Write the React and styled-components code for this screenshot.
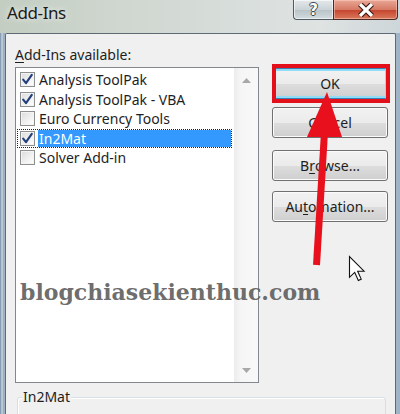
import React from 'react';
import styled, { createGlobalStyle } from 'styled-components';

const GlobalStyle = createGlobalStyle`
  html, body {
    margin: 0;
    padding: 0;
    background: #ffffff;
  }
  body {
    width: 400px;
    height: 414px;
    overflow: hidden;
  }
  * {
    box-sizing: border-box;
  }
`;

const addIns = [
  { name: 'Analysis ToolPak', checked: true },
  { name: 'Analysis ToolPak - VBA', checked: true },
  { name: 'Euro Currency Tools', checked: false },
  { name: 'In2Mat', checked: true, selected: true },
  { name: 'Solver Add-in', checked: false },
];

function CheckBox({ checked }) {
  return (
    <Box>
      {checked && (
        <svg width="13" height="13" viewBox="0 0 13 13">
          <path d="M2.2 6.6 L5 10.2 L10.8 1.8" fill="none" stroke="#233f7c" strokeWidth="2.1" strokeLinecap="round" strokeLinejoin="round" />
        </svg>
      )}
    </Box>
  );
}

const CloseIcon = () => (
  <svg width="20" height="14" viewBox="0 0 20 14">
    <path d="M4 1 L16 13 M16 1 L4 13" stroke="#3b1d16" strokeWidth="5.5" strokeLinecap="butt" />
    <path d="M4 1 L16 13 M16 1 L4 13" stroke="#ffffff" strokeWidth="3.2" strokeLinecap="butt" />
  </svg>
);

function App() {
  return (
    <>
      <GlobalStyle />
      <Window>
        <TitleBar>
          <Title>Add-Ins</Title>
          <CaptionButtons>
            <HelpButton>?</HelpButton>
            <CloseButton>
              <CloseIcon />
            </CloseButton>
          </CaptionButtons>
        </TitleBar>

        <Client>
          <Main>
            <LeftCol>
              <Label>
                <u>A</u>dd-Ins available:
              </Label>
              <ListBox>
                <Items>
                  {addIns.map((item) => (
                    <Row key={item.name} $focused={item.selected}>
                      <CheckBox checked={item.checked} />
                      <ItemText $selected={item.selected}>{item.name}</ItemText>
                    </Row>
                  ))}
                </Items>
                <ScrollBar>
                  <ScrollArrow>
                    <svg width="9" height="5" viewBox="0 0 9 5">
                      <path d="M0 5 L4.5 0 L9 5 Z" fill="#a8a8a8" />
                    </svg>
                  </ScrollArrow>
                  <ScrollArrow>
                    <svg width="9" height="5" viewBox="0 0 9 5">
                      <path d="M0 0 L4.5 5 L9 0 Z" fill="#a8a8a8" />
                    </svg>
                  </ScrollArrow>
                </ScrollBar>
              </ListBox>
            </LeftCol>

            <RightCol>
              <OkWrap>
                <Button $default>OK</Button>
                <RedFrame />
              </OkWrap>
              <Button $gap={8}>Cancel</Button>
              <Button $gap={12}>
                B<u>r</u>owse...
              </Button>
              <Button $gap={10}>
                Au<u>t</u>omation...
              </Button>
            </RightCol>
          </Main>

          <GroupBox>
            <Legend>In2Mat</Legend>
          </GroupBox>
        </Client>

        <Watermark>blogchiasekienthuc.com</Watermark>

        <Overlay width="400" height="414" viewBox="0 0 400 414">
          <line x1="324.5" y1="132" x2="316.5" y2="265" stroke="#e8101c" strokeWidth="7" />
          <polygon points="327,92 307,137 342,137" fill="#e8101c" />
          <path
            transform="translate(349.5 256.5) scale(1.3)"
            d="M0 0 L0 16 L4 12.2 L6.8 18.4 L9 17.4 L6.3 11.3 L11.2 11.3 Z"
            fill="#ffffff"
            stroke="#111111"
            strokeWidth="0.85"
            strokeLinejoin="miter"
          />
        </Overlay>
      </Window>
    </>
  );
}

export default App;

const Window = styled.div`
  position: relative;
  width: 400px;
  height: 414px;
  overflow: hidden;
  font-family: "Noto Sans", "Open Sans", sans-serif;
  color: #1e1e1e;
  background: linear-gradient(90deg, #6f8aa6 0, #c9d5de 2px, #8aa2b8 4px, #b4c3cf 5px, #c6d1d6 50%, #9fb4c6 100%);
`;

const TitleBar = styled.div`
  height: 33px;
  display: flex;
  align-items: flex-start;
  padding: 0 2px 0 7px;
  background: linear-gradient(90deg, #c3cdc1 0%, #cfd7d0 30%, #d8dedb 60%, #dfe3e2 80%, #cdd6da 100%);
`;

const Title = styled.div`
  padding-top: 1px;
  font-size: 17px;
  line-height: 23px;
  letter-spacing: -0.4px;
  color: #1a1a1a;
  text-shadow: 0 0 6px rgba(255, 255, 255, 0.9);
`;

const CaptionButtons = styled.div`
  margin-left: auto;
  display: flex;
`;

const HelpButton = styled.div`
  width: 40px;
  height: 20px;
  border: 1px solid #4f5b64;
  border-top: none;
  border-right: none;
  border-radius: 0 0 0 4px;
  background: linear-gradient(#e4e9eb 0%, #cbd3d7 50%, #b7c2c8 51%, #d3dbde 100%);
  box-shadow: inset 0 0 0 1px rgba(255, 255, 255, 0.6);
  display: flex;
  align-items: center;
  justify-content: center;
  font-family: "DejaVu Sans", sans-serif;
  font-weight: bold;
  font-size: 15px;
  color: #ffffff;
  text-shadow: -1px 0 #3d4a52, 1px 0 #3d4a52, 0 -1px #3d4a52, 0 1px #3d4a52;
`;

const CloseButton = styled.div`
  width: 65px;
  height: 20px;
  border: 1px solid #4a2a22;
  border-top: none;
  border-radius: 0 0 4px 0;
  background: linear-gradient(#e9a897 0%, #d67a65 50%, #c4432d 51%, #d9785a 100%);
  box-shadow: inset 0 0 0 1px rgba(255, 210, 200, 0.5);
  display: flex;
  align-items: center;
  justify-content: center;
`;

const Client = styled.div`
  margin: 0 4px 0 5px;
  height: 381px;
  background: #f0f0f0;
  border: 1px solid #5e6b75;
  border-bottom: none;
  border-radius: 2px 2px 0 0;
  padding: 11px 0 0 9px;
`;

const Main = styled.div`
  display: flex;
`;

const LeftCol = styled.div`
  width: 244px;
  display: flex;
  flex-direction: column;
`;

const Label = styled.div`
  font-size: 14px;
  line-height: 20px;
  margin-bottom: 2px;
  u {
    text-decoration-thickness: 1px;
    text-underline-offset: 2px;
  }
`;

const ListBox = styled.div`
  height: 316px;
  border: 1px solid #828790;
  background: #ffffff;
  display: flex;
`;

const Items = styled.div`
  flex: 1;
  padding: 2px 0 0 1px;
`;

const Row = styled.div`
  width: 215px;
  height: 19.5px;
  display: flex;
  align-items: center;
  padding-left: 2px;
  border: 1px dotted ${(p) => (p.$focused ? '#222' : 'transparent')};
`;

const Box = styled.div`
  width: 15px;
  height: 15px;
  flex: none;
  border: 1px solid #8e8f8f;
  background: linear-gradient(135deg, #dcdcdc 0%, #f2f2f2 60%, #ffffff 100%);
  box-shadow: inset 0 0 0 1px #f4f4f4;
  display: flex;
  align-items: center;
  justify-content: center;
`;

const ItemText = styled.div`
  flex: 1;
  height: 100%;
  margin-left: 3px;
  padding-left: 1px;
  font-size: 14px;
  line-height: 18px;
  white-space: nowrap;
  color: ${(p) => (p.$selected ? '#ffffff' : '#1e1e1e')};
  background: ${(p) => (p.$selected ? '#3399ff' : 'transparent')};
`;

const ScrollBar = styled.div`
  width: 24px;
  display: flex;
  flex-direction: column;
  justify-content: space-between;
  background: linear-gradient(90deg, #ececec 0%, #f6f6f6 30%, #f8f8f8 100%);
`;

const ScrollArrow = styled.div`
  height: 24px;
  display: flex;
  align-items: center;
  justify-content: center;
`;

const RightCol = styled.div`
  margin-left: 13px;
  width: 116px;
  padding-top: 23px;
  display: flex;
  flex-direction: column;
`;

const OkWrap = styled.div`
  position: relative;
`;

const Button = styled.div`
  height: 31px;
  margin-top: ${(p) => (p.$gap ? `${p.$gap}px` : '0')};
  border: 1px solid ${(p) => (p.$default ? '#3c7fb1' : '#707070')};
  border-radius: 3px;
  background: linear-gradient(#f2f2f2 0%, #ebebeb 50%, #dddddd 51%, #cfcfcf 100%);
  box-shadow: ${(p) => (p.$default ? 'inset 0 0 0 2px #8fdcf8' : 'inset 0 0 0 1px #fbfbfb')};
  display: flex;
  align-items: center;
  justify-content: center;
  font-size: 14px;
  color: #1e1e1e;
  u {
    text-decoration-thickness: 1px;
    text-underline-offset: 2px;
  }
`;

const RedFrame = styled.div`
  position: absolute;
  top: -4px;
  bottom: -4px;
  left: 0;
  right: -2px;
  border: 4px solid #e3101c;
`;

const GroupBox = styled.div`
  position: relative;
  margin: 14px 0 0 2px;
  width: 369px;
  height: 40px;
  border: 1px solid #d5dfe5;
  border-radius: 3px;
  box-shadow: inset 1px 1px 0 #ffffff;
`;

const Legend = styled.div`
  position: absolute;
  top: -11px;
  left: 4px;
  padding: 0 1px;
  background: #f0f0f0;
  font-size: 14px;
  line-height: 20px;
`;

const Watermark = styled.div`
  position: absolute;
  left: 20px;
  top: 281px;
  font-family: "DejaVu Serif", serif;
  font-weight: bold;
  font-size: 22px;
  line-height: 22px;
  color: rgba(95, 95, 95, 0.92);
  white-space: nowrap;
`;

const Overlay = styled.svg`
  position: absolute;
  top: 0;
  left: 0;
  pointer-events: none;
`;
